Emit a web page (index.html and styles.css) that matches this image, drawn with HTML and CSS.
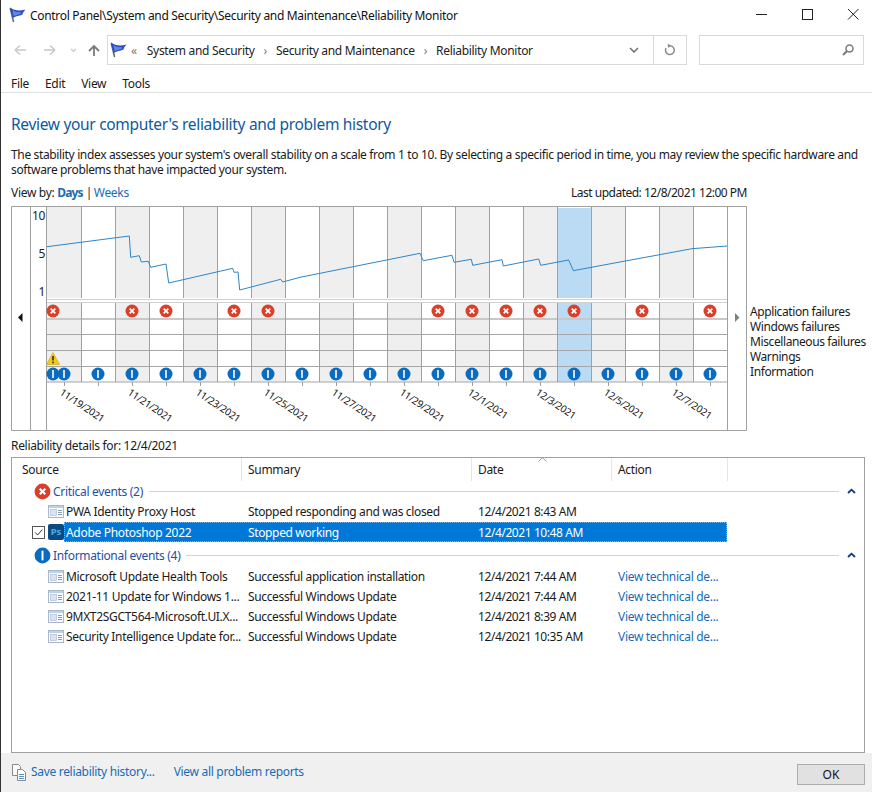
FILE: index.html
```html
<!DOCTYPE html>
<html lang="en">
<head>
<meta charset="utf-8">
<title>Reliability Monitor</title>
<link rel="stylesheet" href="styles.css">
</head>
<body>
<svg class="defs" width="0" height="0" aria-hidden="true">
  <defs>
    <symbol id="flag" viewBox="0 0 17 17">
      <path d="M1.200 1 L4.600 15" stroke="#56657e" stroke-width="1.500" fill="none"/>
      <path d="M1 0.500 C5 3.500 10 4.500 16.500 2.500 C15 4 14 5.500 13.500 7.500 C10 9 7 9 3.600 11 Z" fill="#2a4cc0"/>
      <path d="M3.500 3 C6 5 9 5.500 12.500 5 L11.500 7 C9 7.800 7 8 4.500 9 Z" fill="#5f86e8"/>
    </symbol>
    <symbol id="err" viewBox="0 0 14 14">
      <circle cx="7" cy="7" r="6.500" fill="#d9402a"/>
      <path d="M4.700 4.700 L9.300 9.300 M9.300 4.700 L4.700 9.300" stroke="#fff" stroke-width="1.700"/>
    </symbol>
    <symbol id="inf" viewBox="0 0 14 14">
      <circle cx="7" cy="7" r="6.500" fill="#0a6cc0"/>
      <path d="M7 3 V11" stroke="#fff" stroke-width="1.600"/>
    </symbol>
    <symbol id="app" viewBox="0 0 16 16">
      <rect x="0.500" y="2.500" width="15" height="12" fill="#f8fafd" stroke="#a9b7c8"/>
      <rect x="1" y="3" width="14" height="2" fill="#bcd0e8"/>
      <rect x="2.500" y="6.500" width="6" height="6" fill="#d8e4f2" stroke="#a6bad2" stroke-width="0.600"/>
      <path d="M10 7.500 H14 M10 9.500 H14 M10 11.500 H14" stroke="#8d9db0"/>
    </symbol>
    <symbol id="up" viewBox="0 0 9 6">
      <path d="M1 5 L4.500 1.700 L8 5" fill="none" stroke="#0b3a78" stroke-width="1.800"/>
    </symbol>
  </defs>
</svg>

<div class="window">
  <header class="titlebar">
    <svg class="flag"><use href="#flag"/></svg>
    <span class="title">Control Panel\System and Security\Security and Maintenance\Reliability Monitor</span>
    <div class="winctl">
      <svg class="wbtn" viewBox="0 0 46 30"><path d="M17 14.500 H28" stroke="#222"/></svg>
      <svg class="wbtn" viewBox="0 0 46 30"><rect x="17.500" y="9.500" width="10" height="10" fill="none" stroke="#222"/></svg>
      <svg class="wbtn wbtn-close" viewBox="0 0 41 30"><path d="M17 9 L27.500 19.500 M27.500 9 L17 19.500" fill="none" stroke="#222"/></svg>
    </div>
  </header>

  <nav class="navbar">
    <svg class="navbtns" viewBox="1 0 106 30">
      <path d="M15 15 H26 M15 15 L20 10.500 M15 15 L20 19.500" fill="none" stroke="#c8c8c8" stroke-width="1.500"/>
      <path d="M55 15 H44 M55 15 L50 10.500 M55 15 L50 19.500" fill="none" stroke="#c8c8c8" stroke-width="1.500"/>
      <path d="M71 14 L73.500 16.500 L76 14" fill="none" stroke="#c8c8c8" stroke-width="1.200"/>
      <path d="M94 21 V11 M89 16 L94 11 L99 16" fill="none" stroke="#7a7a7a" stroke-width="1.800"/>
    </svg>
    <div class="address">
      <svg class="flag"><use href="#flag"/></svg>
      <span class="crumb-more">«</span>
      <span class="crumb">System and Security</span><span class="sep">›</span>
      <span class="crumb">Security and Maintenance</span><span class="sep">›</span>
      <span class="crumb">Reliability Monitor</span>
      <span class="fill"></span>
      <svg class="addr-drop" viewBox="0 0 12 8"><path d="M2 2 L6 6 L10 2" fill="none" stroke="#6e6e6e" stroke-width="1.500"/></svg>
      <span class="addr-refresh">
        <svg class="refresh" viewBox="0 0 14 14"><path d="M7 2.800 A4.400 4.400 0 1 1 3 5.200" fill="none" stroke="#8a8a8a" stroke-width="1.500"/><path d="M4.800 0.500 L8 2.800 L5 5 Z" fill="#8a8a8a"/></svg>
      </span>
    </div>
    <div class="search">
      <svg class="lens" viewBox="0 0 14 14"><circle cx="8.500" cy="5.500" r="3.500" fill="none" stroke="#7a7a7a" stroke-width="1.500"/><path d="M6 8 L2 12" stroke="#7a7a7a" stroke-width="2"/></svg>
    </div>
  </nav>

  <div class="menubar">
    <span>File</span><span>Edit</span><span>View</span><span>Tools</span>
  </div>

  <main class="content">
    <h1 class="heading">Review your computer's reliability and problem history</h1>
    <p class="desc">The stability index assesses your system's overall stability on a scale from 1 to 10. By selecting a specific period in time, you may review the specific hardware and software problems that have impacted your system.</p>
    <div class="viewby">
      <span>View by: <a class="link strong">Days</a> | <a class="link weeks">Weeks</a></span>
      <span class="updated">Last updated: 12/8/2021 12:00 PM</span>
    </div>

    <div class="chartwrap">
      <svg class="chart" width="736" height="225" viewBox="11 206 736 225">
        <!-- column bands -->
        <g class="band">
          <rect x="47" y="207" width="34" height="91"/><rect x="115" y="207" width="34" height="91"/><rect x="183" y="207" width="34" height="91"/><rect x="251" y="207" width="34" height="91"/><rect x="319" y="207" width="34" height="91"/><rect x="387" y="207" width="34" height="91"/><rect x="455" y="207" width="34" height="91"/><rect x="523" y="207" width="34" height="91"/><rect x="591" y="207" width="34" height="91"/><rect x="659" y="207" width="34" height="91"/>
          <rect x="47" y="303" width="34" height="79"/><rect x="115" y="303" width="34" height="79"/><rect x="183" y="303" width="34" height="79"/><rect x="251" y="303" width="34" height="79"/><rect x="319" y="303" width="34" height="79"/><rect x="387" y="303" width="34" height="79"/><rect x="455" y="303" width="34" height="79"/><rect x="523" y="303" width="34" height="79"/><rect x="591" y="303" width="34" height="79"/><rect x="659" y="303" width="34" height="79"/>
        </g>
        <g class="sel">
          <rect x="558" y="208" width="33" height="90"/>
          <rect x="558" y="303" width="33" height="79"/>
        </g>
        <!-- horizontal rules -->
        <g class="hr">
          <path class="hr-light" d="M47 299.500 H727 M47 302.500 H727"/>
          <path class="hr-thick" d="M47 319 H727"/>
          <path d="M47 334.500 H727 M47 350.500 H727 M47 366.500 H727 M47 382 H727"/>
        </g>
        <!-- column rules -->
        <path class="vr" d="M81.500 207 V298 M81.500 303 V382 M115.500 207 V298 M115.500 303 V382 M149.500 207 V298 M149.500 303 V382 M183.500 207 V298 M183.500 303 V382 M217.500 207 V298 M217.500 303 V382 M251.500 207 V298 M251.500 303 V382 M285.500 207 V298 M285.500 303 V382 M319.500 207 V298 M319.500 303 V382 M353.500 207 V298 M353.500 303 V382 M387.500 207 V298 M387.500 303 V382 M421.500 207 V298 M421.500 303 V382 M455.500 207 V298 M455.500 303 V382 M489.500 207 V298 M489.500 303 V382 M523.500 207 V298 M523.500 303 V382 M557.500 207 V298 M557.500 303 V382 M591.500 207 V298 M591.500 303 V382 M625.500 207 V298 M625.500 303 V382 M659.500 207 V298 M659.500 303 V382 M693.500 207 V298 M693.500 303 V382"/>
        <!-- frame -->
        <path class="frame" d="M11.500 206.500 H746.500 V430.500 H11.500 Z M30.500 206.500 V430.500 M46.500 206.500 V430.500 M727.500 206.500 V430.500"/>
        <path class="ticks" d="M64.500 382 V386 M98.500 382 V386 M132.500 382 V386 M166.500 382 V386 M200.500 382 V386 M234.500 382 V386 M268.500 382 V386 M302.500 382 V386 M336.500 382 V386 M370.500 382 V386 M404.500 382 V386 M438.500 382 V386 M472.500 382 V386 M506.500 382 V386 M540.500 382 V386 M574.500 382 V386 M608.500 382 V386 M642.500 382 V386 M676.500 382 V386 M710.500 382 V386"/>
        <!-- stability line -->
        <polyline class="stab" points="47,246.700 129.300,236 130.700,257.300 139.300,255.700 141.300,262 148.300,261.300 150.700,267.300 166,264 168.700,283 232.700,268.300 234,272.300 238,272 239.700,290 280.700,279.300 282.700,282 300,277.300 420,253.300 423.300,260.700 452,255.300 454,262.300 471.300,259.300 472.700,265.300 502,259.700 503.300,266 538.700,259 540.700,265.300 568.700,260 573.300,270.700 600,265.700 692,248.700 727,246"/>
        <!-- axis labels -->
        <g class="axis">
          <text x="45" y="220">10</text>
          <text x="45" y="258">5</text>
          <text x="45" y="296">1</text>
        </g>
        <!-- scroll arrows -->
        <path d="M18 317.500 L22.500 313 V322 Z" fill="#111"/>
        <path d="M735 313 L739.500 317.500 L735 322 Z" fill="#808080"/>
        <!-- error markers -->
        <g>
          <use href="#err" x="46" y="304" width="14" height="14"/>
          <use href="#err" x="125" y="304" width="14" height="14"/>
          <use href="#err" x="159" y="304" width="14" height="14"/>
          <use href="#err" x="227" y="304" width="14" height="14"/>
          <use href="#err" x="261" y="304" width="14" height="14"/>
          <use href="#err" x="431" y="304" width="14" height="14"/>
          <use href="#err" x="465" y="304" width="14" height="14"/>
          <use href="#err" x="499" y="304" width="14" height="14"/>
          <use href="#err" x="533" y="304" width="14" height="14"/>
          <use href="#err" x="567" y="304" width="14" height="14"/>
          <use href="#err" x="635" y="304" width="14" height="14"/>
          <use href="#err" x="703" y="304" width="14" height="14"/>
        </g>
        <!-- warning -->
        <path d="M53 352.500 L59.500 364.500 H46.500 Z" fill="#f5c916" stroke="#c9a210" stroke-width="0.600"/>
        <path d="M53 356 V360.500 M53 361.700 V363.200" stroke="#222" stroke-width="1.500"/>
        <!-- info markers -->
        <g>
          <use href="#inf" x="46" y="367" width="14" height="14"/>
          <use href="#inf" x="57" y="367" width="14" height="14"/>
          <use href="#inf" x="91" y="367" width="14" height="14"/>
          <use href="#inf" x="125" y="367" width="14" height="14"/>
          <use href="#inf" x="159" y="367" width="14" height="14"/>
          <use href="#inf" x="193" y="367" width="14" height="14"/>
          <use href="#inf" x="227" y="367" width="14" height="14"/>
          <use href="#inf" x="261" y="367" width="14" height="14"/>
          <use href="#inf" x="295" y="367" width="14" height="14"/>
          <use href="#inf" x="329" y="367" width="14" height="14"/>
          <use href="#inf" x="363" y="367" width="14" height="14"/>
          <use href="#inf" x="397" y="367" width="14" height="14"/>
          <use href="#inf" x="431" y="367" width="14" height="14"/>
          <use href="#inf" x="465" y="367" width="14" height="14"/>
          <use href="#inf" x="499" y="367" width="14" height="14"/>
          <use href="#inf" x="533" y="367" width="14" height="14"/>
          <use href="#inf" x="567" y="367" width="14" height="14"/>
          <use href="#inf" x="601" y="367" width="14" height="14"/>
          <use href="#inf" x="635" y="367" width="14" height="14"/>
          <use href="#inf" x="669" y="367" width="14" height="14"/>
          <use href="#inf" x="703" y="367" width="14" height="14"/>
        </g>
        <!-- date labels -->
        <g class="dates">
          <text transform="translate(59,394) rotate(34)">11/19/2021</text>
          <text transform="translate(127,394) rotate(34)">11/21/2021</text>
          <text transform="translate(195,394) rotate(34)">11/23/2021</text>
          <text transform="translate(263,394) rotate(34)">11/25/2021</text>
          <text transform="translate(331,394) rotate(34)">11/27/2021</text>
          <text transform="translate(399,394) rotate(34)">11/29/2021</text>
          <text transform="translate(467,394) rotate(34)">12/1/2021</text>
          <text transform="translate(535,394) rotate(34)">12/3/2021</text>
          <text transform="translate(603,394) rotate(34)">12/5/2021</text>
          <text transform="translate(671,394) rotate(34)">12/7/2021</text>
        </g>
      </svg>
      <ul class="legend">
        <li>Application failures</li>
        <li>Windows failures</li>
        <li>Miscellaneous failures</li>
        <li>Warnings</li>
        <li>Information</li>
      </ul>
    </div>

    <div class="details-label">Reliability details for: 12/4/2021</div>

    <section class="table">
      <svg class="sort" viewBox="0 0 9 5"><path d="M0.500 4.500 L4.500 0.700 L8.500 4.500" fill="none" stroke="#9a9a9a"/></svg>
      <div class="thead">
        <div class="th th-src">Source</div>
        <div class="th th-sum">Summary</div>
        <div class="th th-date">Date</div>
        <div class="th th-act">Action</div>
      </div>

      <div class="group group-crit">
        <svg class="gicon"><use href="#err"/></svg>
        <span class="gname">Critical events (2)</span>
        <span class="gline"></span>
        <svg class="gup"><use href="#up"/></svg>
      </div>
      <div class="row">
        <span class="chk"></span>
        <svg class="ricon"><use href="#app"/></svg>
        <span class="c-src">PWA Identity Proxy Host</span>
        <span class="c-sum">Stopped responding and was closed</span>
        <span class="c-date">12/4/2021 8:43 AM</span>
        <span class="c-act"></span>
      </div>
      <div class="row row-sel">
        <span class="chk checked"><svg viewBox="0 0 13 13"><path d="M2.500 6.500 L5.500 9.500 L11 3" fill="none" stroke="#222" stroke-width="1.100"/></svg></span>
        <span class="ps">Ps</span>
        <div class="selbar">
          <span class="c-src">Adobe Photoshop 2022</span>
          <span class="c-sum">Stopped working</span>
          <span class="c-date">12/4/2021 10:48 AM</span>
          <span class="c-act"></span>
        </div>
      </div>

      <div class="group group-info">
        <svg class="gicon"><use href="#inf"/></svg>
        <span class="gname">Informational events (4)</span>
        <span class="gline"></span>
        <svg class="gup"><use href="#up"/></svg>
      </div>
      <div class="row">
        <span class="chk"></span>
        <svg class="ricon"><use href="#app"/></svg>
        <span class="c-src">Microsoft Update Health Tools</span>
        <span class="c-sum">Successful application installation</span>
        <span class="c-date">12/4/2021 7:44 AM</span>
        <a class="c-act link">View technical de...</a>
      </div>
      <div class="row">
        <span class="chk"></span>
        <svg class="ricon"><use href="#app"/></svg>
        <span class="c-src">2021-11 Update for Windows 1...</span>
        <span class="c-sum">Successful Windows Update</span>
        <span class="c-date">12/4/2021 7:44 AM</span>
        <a class="c-act link">View technical de...</a>
      </div>
      <div class="row">
        <span class="chk"></span>
        <svg class="ricon"><use href="#app"/></svg>
        <span class="c-src">9MXT2SGCT564-Microsoft.UI.X...</span>
        <span class="c-sum">Successful Windows Update</span>
        <span class="c-date">12/4/2021 8:39 AM</span>
        <a class="c-act link">View technical de...</a>
      </div>
      <div class="row">
        <span class="chk"></span>
        <svg class="ricon"><use href="#app"/></svg>
        <span class="c-src">Security Intelligence Update for...</span>
        <span class="c-sum">Successful Windows Update</span>
        <span class="c-date">12/4/2021 10:35 AM</span>
        <a class="c-act link">View technical de...</a>
      </div>
    </section>
  </main>

  <footer class="footer">
    <svg class="saveicon" viewBox="0 0 16 18">
      <path d="M1.500 1.500 H7.500 L9.500 3.500 V12.500 H1.500 Z" fill="#fafafa" stroke="#8a8a8a"/>
      <path d="M6.500 6.500 H11.500 L14.500 9.500 V17.500 H6.500 Z" fill="#fff" stroke="#7d8a9a"/>
      <path d="M8 11.500 H13 M8 13.500 H13 M8 15.500 H13" stroke="#5b8fc4"/>
    </svg>
    <a class="link savelink">Save reliability history...</a>
    <a class="link">View all problem reports</a>
    <span class="fill"></span>
    <button class="ok" type="button">OK</button>
  </footer>
</div>
</body>
</html>
```

FILE: styles.css
```css
* { box-sizing: border-box; }
html, body { margin: 0; padding: 0; height: 100%; overflow: hidden; }
body {
  background: #fff;
  color: #1a1a1a;
  font-family: "Noto Sans", "Open Sans", sans-serif;
  font-size: 12px;
  letter-spacing: -0.31px;
}
.defs { position: absolute; }
.window {
  width: 872px;
  height: 792px;
  display: flex;
  flex-direction: column;
  border-left: 1px solid #333;
}
.flag { width: 17px; height: 17px; flex: none; }
.link { color: #1a6bb5; text-decoration: none; }
.strong { font-weight: 700; letter-spacing: -0.8px; }
.weeks { margin-left: -1px; }
.fill { flex: 1; }

.titlebar { height: 30px; display: flex; align-items: center; padding-left: 8px; flex: none; }
.title { margin-left: 4px; color: #111; }
.winctl { margin-left: auto; display: flex; }
.wbtn { width: 46px; height: 30px; display: block; }
.wbtn-close { width: 41px; }

.navbar { height: 36px; display: flex; align-items: flex-start; padding-top: 5px; flex: none; }
.navbtns { width: 106px; height: 30px; flex: none; }
.address {
  width: 580px; height: 30px; border: 1px solid #d9d9d9;
  display: flex; align-items: center; padding-left: 2px; flex: none;
}
.crumb-more { margin: 0 10px 0 4px; color: #777; font-size: 12px; }
.crumb { color: #222; }
.sep { margin: 0 9px; color: #777; }
.addr-drop { width: 12px; height: 8px; margin-right: 13px; }
.addr-refresh { width: 33px; height: 28px; border-left: 1px solid #d9d9d9; display: flex; align-items: center; justify-content: center; }
.refresh { width: 14px; height: 14px; }
.search {
  width: 165px; height: 30px; border: 1px solid #d9d9d9; margin-left: 12px;
  display: flex; align-items: center; justify-content: flex-end; padding-right: 8px; flex: none;
}
.lens { width: 14px; height: 14px; }

.menubar {
  height: 27px; flex: none; display: flex; gap: 16px; align-items: flex-end; padding: 0 0 0 10px;
  border-bottom: 1px solid #e0e0e0;
}

.content { flex: 1; min-height: 0; display: flex; flex-direction: column; padding: 0 6px 0 10px; }
.heading { margin: 21px 0 0; font-size: 15.500px; font-weight: 400; line-height: 20px; color: #0e5a9e; }
.desc { margin: 13px 0 0; line-height: 15px; width: 854px; letter-spacing: -0.35px; }
.viewby { display: flex; justify-content: space-between; width: 736px; margin-top: 8px; line-height: 15px; height: 21px; }
.updated { letter-spacing: -0.5px; }

.chartwrap { display: flex; align-items: flex-start; height: 225px; flex: none; }
.chart { display: block; flex: none; }
.band rect { fill: #efefef; }
.sel rect { fill: #bbdaf3; }
.hr path { fill: none; stroke: #a6a6a6; }
.hr .hr-light { stroke: #d0d0d0; }
.hr .hr-thick { stroke: #c8c8c8; stroke-width: 2; }
.vr { fill: none; stroke: #a0a0a0; }
.frame { fill: none; stroke: #a0a0a0; }
.ticks { fill: none; stroke: #a0a0a0; }
.stab { fill: none; stroke: #2e86c8; stroke-width: 1; }
.axis text { text-anchor: end; font-size: 12px; fill: #222; }
.dates text { font-size: 10px; letter-spacing: -0.2px; fill: #111; }

.legend { list-style: none; margin: 98px 0 0 3px; padding: 0; line-height: 15px; white-space: nowrap; letter-spacing: -0.4px; }

.details-label { margin-top: 7px; line-height: 16px; height: 19px; }

.table {
  position: relative;
  height: 296px; width: 854px; flex: none;
  border: 1px solid #a0a0a0;
  background: #fff;
}
.sort { position: absolute; left: 526px; top: -1px; width: 9px; height: 5px; }
.thead { display: flex; height: 23px; }
.th { height: 23px; line-height: 23px; border-right: 1px solid #e5e5e5; padding-left: 6px; }
.th-src { width: 230px; padding-left: 10px; }
.th-sum { width: 230px; }
.th-date { width: 140px; }
.th-act { width: 116px; }

.group { display: flex; align-items: center; height: 20px; padding-left: 22px; }
.group-info { margin-top: 3px; }
.gicon { width: 17px; height: 17px; flex: none; }
.gname { color: #1e4fa3; margin-left: 2px; white-space: nowrap; }
.gline { flex: 1; height: 1px; background: #ccd3e6; margin: 0 6px; }
.gup { width: 9px; height: 6px; flex: none; margin: 0 8px 0 2px; }

.row { display: flex; align-items: center; height: 20px; padding-left: 20px; white-space: nowrap; }
.row-sel { margin-top: 1px; }
.group-info + .row { margin-top: 1px; }
.chk { width: 13px; height: 13px; flex: none; margin-right: 3px; }
.chk.checked { border: 1px solid #555; background: #fff; display: block; }
.chk.checked svg { display: block; width: 11px; height: 11px; }
.ricon { width: 16px; height: 16px; flex: none; margin-right: 2px; }
.ps {
  width: 16px; height: 16px; flex: none; background: #0c4a80; color: #48aef2; border-radius: 2px;
  font-size: 9.500px; font-weight: 700; line-height: 16px; text-align: center; letter-spacing: 0;
}
.c-src { width: 182px; flex: none; overflow: hidden; }
.c-sum { width: 230px; flex: none; letter-spacing: -0.36px; }
.c-date { width: 140px; flex: none; letter-spacing: -0.42px; }
.c-act { width: 109px; flex: none; }
.selbar {
  display: flex; align-items: center; height: 20px; padding-left: 2px;
  background: #0078d7; color: #fff; outline: 1px dotted #7fb6e6; outline-offset: -1px;
}

.footer {
  height: 39px; flex: none; background: #f0f0f0; display: flex; align-items: center;
  padding: 0 7px 2px 10px;
}
.saveicon { width: 16px; height: 18px; margin-right: 4px; flex: none; }
.savelink { margin-right: 19px; }
.ok {
  width: 68px; height: 21px; background: #e1e1e1; border: 1px solid #adadad; font: inherit; color: #111; padding: 0; margin-top: 6px;
}
```
